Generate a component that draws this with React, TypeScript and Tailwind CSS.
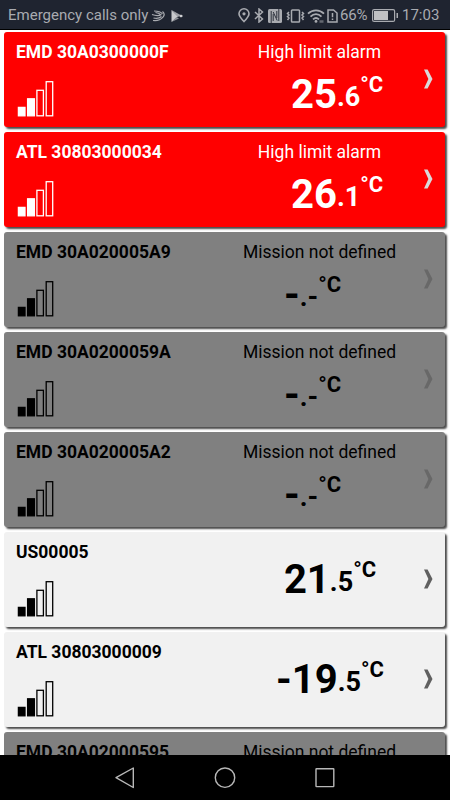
import React from 'react';
import clsx from 'clsx';

type Status = 'alarm' | 'undefined' | 'ok';

interface Sensor {
  name: string;
  status: Status;
  message?: string;
  whole: string;
  decimal: string;
}

const sensors: Sensor[] = [
  { name: 'EMD 30A0300000F', status: 'alarm', message: 'High limit alarm', whole: '25', decimal: '6' },
  { name: 'ATL 30803000034', status: 'alarm', message: 'High limit alarm', whole: '26', decimal: '1' },
  { name: 'EMD 30A020005A9', status: 'undefined', message: 'Mission not defined', whole: '-', decimal: '-' },
  { name: 'EMD 30A0200059A', status: 'undefined', message: 'Mission not defined', whole: '-', decimal: '-' },
  { name: 'EMD 30A020005A2', status: 'undefined', message: 'Mission not defined', whole: '-', decimal: '-' },
  { name: 'US00005', status: 'ok', whole: '21', decimal: '5' },
  { name: 'ATL 30803000009', status: 'ok', whole: '-19', decimal: '5' },
  { name: 'EMD 30A02000595', status: 'undefined', message: 'Mission not defined', whole: '-', decimal: '-' },
];

const cardStyles: Record<Status, string> = {
  alarm: 'bg-[#ff0000] text-white',
  undefined: 'bg-[#808080] text-black',
  ok: 'bg-[#f1f1f1] text-black',
};

const chevronStyles: Record<Status, string> = {
  alarm: 'text-[#d9d9d9]',
  undefined: 'text-[#686868]',
  ok: 'text-[#606060]',
};

const SignalBars = () => (
  <svg width="38" height="38" viewBox="0 0 38 38" fill="none" stroke="currentColor" strokeWidth="1.3">
    <rect x="2.4" y="27.4" width="6.6" height="8.4" fill="currentColor" />
    <rect x="11.6" y="18.8" width="6.8" height="17" fill="currentColor" />
    <rect x="20.9" y="10.3" width="6.5" height="25.5" />
    <rect x="30.2" y="1.7" width="6.5" height="34.1" />
  </svg>
);

const StatusBar = () => (
  <header className="flex h-[30px] shrink-0 items-center border-b border-black bg-[#1f2430] pt-[2px] text-[15px] leading-none text-[#a9abb0]">
    <span className="ml-[8px] w-[143px] whitespace-nowrap">Emergency calls only</span>
    <svg className="shrink-0" width="15" height="12" viewBox="0 0 15 12" fill="none" stroke="currentColor" strokeWidth="1.2">
      <path d="M3 1c4 0 7 1 8.5 3M1 4.5c4 1.500 7 1.500 9.500 0M4.500 2.500c2.500.3 4 1 5 2M11.500 1.500c2 1.800 2 4 .5 5.700C10 9.500 6 11 2 10.500M10.500 6.500C8.500 8.300 5 8.700 2.500 8" />
    </svg>
    <svg className="ml-[4px] shrink-0" width="14" height="14" viewBox="0 0 14 14">
      <path d="M1.5 1v12L8 7.5z" fill="#c9cacd" />
      <path d="M1.5 1l9 5-2.500 2z" fill="#a0a2a8" />
      <path d="M1.5 13l5-5 2.500 1.500z" fill="#8c8f95" />
      <path d="M9 7l2-1.500L13 7l-2 1.500z" fill="#d5d6d8" />
    </svg>
    <div className="ml-[54px] flex items-center">
      {/* location */}
      <svg className="shrink-0" width="12" height="15" viewBox="0 0 12 15" fill="none" stroke="currentColor" strokeWidth="1.6">
        <path d="M6 13.5C4 11.5 1 8.5 1 5.8a5 5 0 0 1 10 0c0 2.7-3 5.700-5 7.700z" />
        <circle cx="6" cy="5.8" r="1.6" fill="currentColor" stroke="none" />
      </svg>
      {/* bluetooth */}
      <svg className="ml-[4px] shrink-0" width="10" height="15" viewBox="0 0 10 15" fill="none" stroke="currentColor" strokeWidth="1.5">
        <path d="M1 4l7.500 7L5 14V1l3.500 3L1 11" />
      </svg>
      {/* nfc */}
      <svg className="ml-[4px] shrink-0" width="14" height="14" viewBox="0 0 14 14">
        <rect width="14" height="14" rx="1.5" fill="currentColor" />
        <path d="M3.200 2v12M5.200 5v7M5.200 3l4 8.500M8.800 2v7M10.800 0v12" stroke="#1f2430" strokeWidth=".9" fill="none" />
      </svg>
      {/* vibrate */}
      <svg className="ml-[4px] shrink-0" width="19" height="14" viewBox="0 0 19 14" fill="none" stroke="currentColor" strokeWidth="1.5">
        <rect x="5.5" y="1" width="8" height="12" rx=".8" />
        <path d="M3 3L1.5 4.5 3 6 1.5 7.5 3 9l-1.5 2M16 3l1.5 1.5L16 6l1.5 1.5L16 9l1.5 2" />
      </svg>
      {/* wifi */}
      <svg className="ml-[2px] shrink-0" width="18" height="14" viewBox="0 0 18 14" fill="none" stroke="currentColor" strokeWidth="1.8">
        <path d="M1 4.7c4.5-4.5 11.5-4.5 16 0M3.5 7.6c3.300-3.200 7.700-3.200 11 0M6 10.300c2-1.800 4-1.800 6 0" />
        <circle cx="9" cy="12.400" r="1.400" fill="currentColor" stroke="none" />
        <path d="M12.500 12.500h4" strokeWidth="2.500" opacity=".5" />
      </svg>
      {/* sim warning */}
      <svg className="ml-[2px] shrink-0" width="11" height="14" viewBox="0 0 11 14" fill="none" stroke="currentColor" strokeWidth="1.5">
        <path d="M1 1h5.5L10 4v9H1zM5.5 4v4.200M5.5 9.500v1.600" />
      </svg>
      <span className="ml-[2px] w-[31px] text-[15px] tracking-[-0.2px]">66%</span>
      <svg className="ml-px shrink-0" width="26" height="13" viewBox="0 0 26 13">
        <rect x=".6" y=".6" width="22" height="11.8" rx="1.5" fill="none" stroke="currentColor" strokeWidth="1.2" />
        <rect x="2" y="2" width="14" height="9" fill="#c0c1c4" />
        <rect x="24.5" y="4" width="1.5" height="5" fill="currentColor" />
      </svg>
      <span className="ml-[4px] text-[15px]">17:03</span>
    </div>
  </header>
);

const SensorCard = ({ sensor }: { sensor: Sensor }) => {
  const { name, status, message, whole, decimal } = sensor;

  return (
    <li
      className={clsx(
        'flex h-[95px] shrink-0 rounded-[3px] shadow-[2px_2px_2px_#4b4b4b]',
        cardStyles[status],
      )}
    >
      <div className="flex w-[224px] flex-col pl-[12px] pt-[10px]">
        <h2 className="text-[17.5px] font-bold leading-[20px] whitespace-nowrap">{name}</h2>
        <div className="mt-[18px]">
          <SignalBars />
        </div>
      </div>
      <div className="flex w-[182px] flex-col pt-[10px]">
        {message && <p className="pl-px text-center text-[17.5px] leading-[20px]">{message}</p>}
        <div
          className={clsx(
            'h-[48px] whitespace-nowrap font-bold leading-[48px]',
            message ? 'mt-[9px]' : 'mt-[14px]',
            status === 'alarm' && 'pl-[63px]',
            status === 'undefined' && 'pl-[56px]',
            status === 'ok' && 'pl-[22px] text-center',
          )}
        >
          <span className="text-[40px]">{whole}</span>
          <span className="align-[2px] text-[27px] leading-none">.{decimal}</span>
          <span className="align-[16px] text-[22px] leading-none">°C</span>
        </div>
      </div>
      <svg
        className={clsx('ml-[14px] mt-[37px] shrink-0', chevronStyles[status])}
        width="9"
        height="20"
        viewBox="0 0 9 20"
        fill="currentColor"
      >
        <path d="M0 .5h3.6L8.5 10l-4.900 9.500H0L4.400 10z" />
      </svg>
    </li>
  );
};

const NavBar = () => (
  <nav className="flex h-[45px] shrink-0 items-center justify-center gap-[78px] bg-black text-[#b8b8b8]">
    <svg width="22" height="22" viewBox="0 0 22 22" fill="none" stroke="currentColor" strokeWidth="1.4" strokeLinejoin="round">
      <path d="M19.3 1v19.5L2 10.7z" />
    </svg>
    <svg width="22" height="22" viewBox="0 0 22 22" fill="none" stroke="currentColor" strokeWidth="1.4">
      <circle cx="11" cy="10.7" r="9.7" />
    </svg>
    <svg width="22" height="22" viewBox="0 0 22 22" fill="none" stroke="currentColor" strokeWidth="1.4">
      <rect x="2" y="1.8" width="17.8" height="17.8" rx=".5" />
    </svg>
  </nav>
);

const App: React.FC = () => (
  <div className="flex h-[800px] w-[450px] flex-col overflow-hidden bg-white font-['Roboto',sans-serif]">
    <StatusBar />
    <ul className="flex min-h-0 flex-1 flex-col gap-[5px] overflow-hidden pl-[4px] pr-[5px] pt-[2px]">
      {sensors.map((sensor) => (
        <SensorCard key={sensor.name} sensor={sensor} />
      ))}
    </ul>
    <NavBar />
  </div>
);

export default App;
